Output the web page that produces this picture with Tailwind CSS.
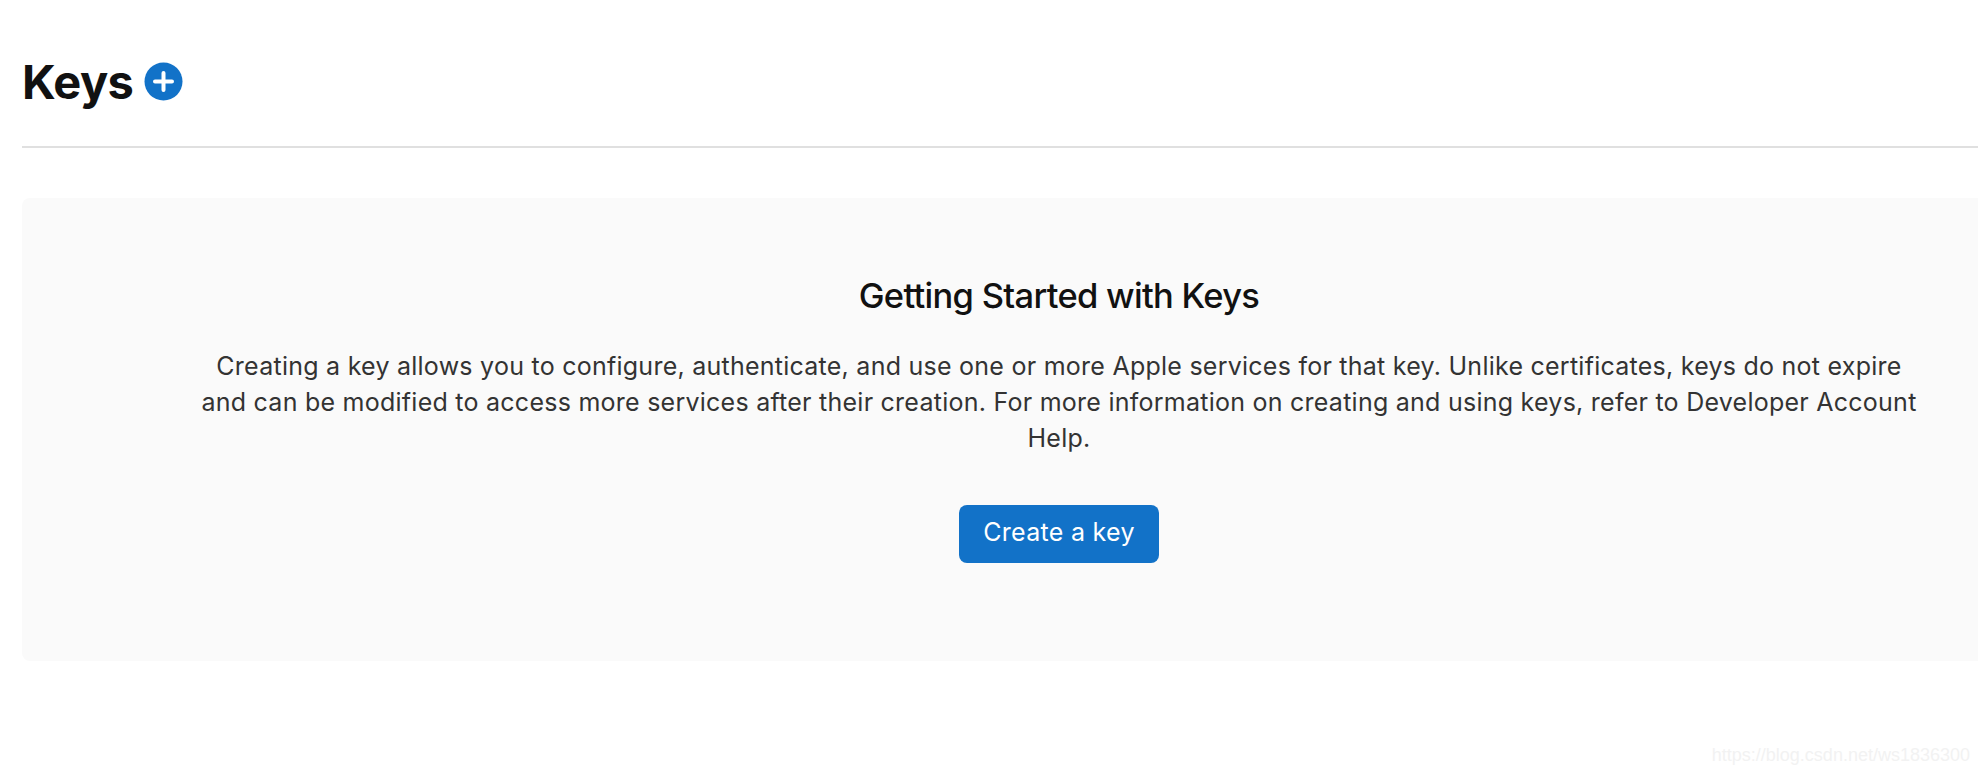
<!DOCTYPE html>
<html lang="en">
<head>
  <meta charset="UTF-8">
  <title>Keys</title>
  <script src="https://cdn.jsdelivr.net/npm/@tailwindcss/browser@4"></script>
</head>
<body class="relative h-[774px] overflow-hidden bg-white font-['Inter','Liberation_Sans',sans-serif]">
  <main class="pl-[22px]">
    <!-- header -->
    <div class="flex h-[148px] items-start gap-[11px] border-b-2 border-[#e0e0e0] pt-[52px]">
      <h1 class="text-[47px] leading-[60px] font-bold tracking-[-0.6px] text-[#111111]">Keys</h1>
      <svg class="mt-[10px]" width="39" height="39" viewBox="0 0 39 39">
        <circle cx="19.5" cy="19.5" r="19" fill="#1272c8"/>
        <path d="M19.5 11v17M11 19.5h17" stroke="#fff" stroke-width="4" stroke-linecap="round"/>
      </svg>
    </div>

    <!-- empty state card -->
    <section class="mt-[50px] h-[463px] w-[2000px] rounded-l-lg bg-[#fafafa] pt-[73px]">
      <div class="ml-[172px] flex w-[1730px] flex-col items-center text-center">
        <h2 class="text-[34.5px] leading-[50px] font-medium tracking-[-0.7px] text-[#111111]">Getting Started with Keys</h2>
        <p class="mt-[27px] text-[25px] leading-[36px] tracking-[0.25px] text-[#333333]">Creating a key allows you to configure, authenticate, and use one or more Apple services for that key. Unlike certificates, keys do not expire and can be modified to access more services after their creation. For more information on creating and using keys, refer to Developer Account Help.</p>
        <button class="mt-[49px] h-[58px] w-[200px] rounded-lg bg-[#1272c8] pb-[2px] text-[25px] tracking-[0.3px] text-white">Create a key</button>
      </div>
    </section>
  </main>

  <!-- watermark -->
  <span class="absolute right-[8px] bottom-[8px] font-['Liberation_Sans',sans-serif] text-[18px] leading-[22px] text-[#f2f2f2]">https://blog.csdn.net/ws1836300</span>
</body>
</html>
